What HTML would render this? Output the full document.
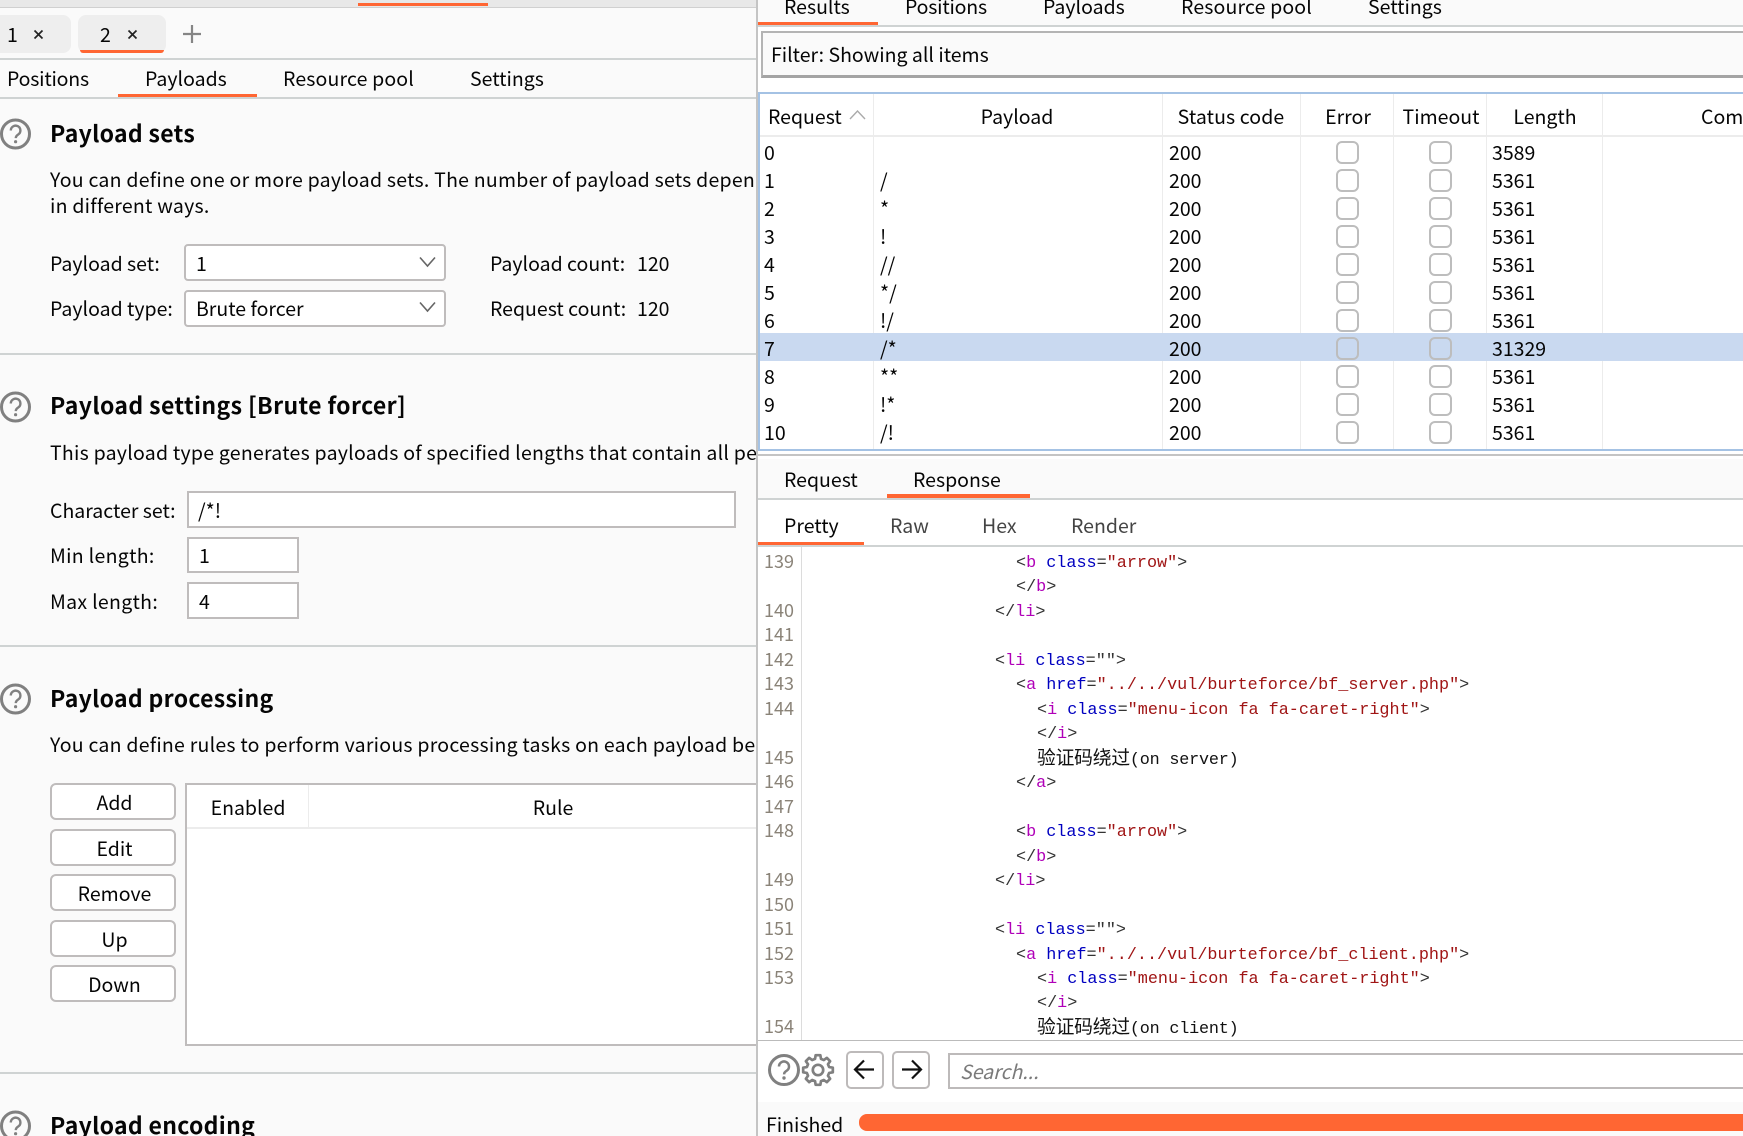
<!DOCTYPE html>
<html><head><meta charset="utf-8"><style>
html,body{margin:0;padding:0;width:1743px;height:1136px;overflow:hidden;background:#fff}
body{position:relative;font-family:"Noto Sans CJK SC","Liberation Sans",sans-serif;font-size:19.5px;color:#050505}
div,span.t,svg{box-sizing:border-box}
.a{position:absolute}
.t{position:absolute;white-space:nowrap;line-height:30px;height:30px}
.c{transform:translateX(-50%)}
.h{font-weight:700;font-size:23px;letter-spacing:.3px}
.p{letter-spacing:.24px}
.or{position:absolute;background:#ff6633}
.ln{position:absolute;background:#cfd3d3}
.in{position:absolute;background:#fff;border:2px solid #bfbcbc}
.sel{border-radius:4px}
.btn{position:absolute;left:50px;width:126px;height:37px;background:#fff;border:2px solid #bfbcbc;border-radius:6px;text-align:center;line-height:34px;padding-left:3px}
.sep{position:absolute;width:1px;background:#ececec}
.cb{position:absolute;width:23px;height:23px;border:2px solid #bdbdbd;border-radius:6px;background:#fff}
.code{position:absolute;white-space:pre;font-family:"Liberation Mono","Noto Sans CJK SC",monospace;font-size:16.8px;line-height:24px;height:24px;color:#333}
.code b,.code i{font-weight:400;font-style:normal}
.m{color:#b000b8}.u{color:#0000c0}.r{color:#a01515}
.zh{font-family:"Noto Sans CJK SC",sans-serif;font-size:18.8px;color:#111}
.k{color:#111;letter-spacing:-.2px}
.n{position:absolute;left:764px;font-size:18px;line-height:24px;color:#8a8378;white-space:nowrap}
</style></head><body>

<!-- LEFT PANEL -->
<div class="a" id="left" style="left:0;top:0;width:757px;height:1136px;background:#fafafa;overflow:hidden">
<div class="a" style="left:0;top:0;width:757px;height:7px;background:#e8e8e8"></div>
<div class="ln" style="left:0;top:7px;width:757px;height:1px;background:#d0d0d0"></div>
<div class="or" style="left:358px;top:3px;width:130px;height:3px"></div>

<div class="a" style="left:-10px;top:15px;width:81px;height:38px;background:#eee;border-radius:8px"></div>
<div class="a" style="left:78px;top:15px;width:88px;height:38px;background:#eee;border-radius:8px"></div>
<div class="or" style="left:80px;top:50px;width:84px;height:3px;border-radius:0 0 3px 3px"></div>
<span class="t" style="left:7px;top:19px">1</span>
<svg class="a" style="left:33px;top:29px" width="11" height="11"><path d="M1.5 1.5L9.5 9.5M9.5 1.5L1.5 9.5" stroke="#222" stroke-width="1.7" fill="none"/></svg>
<span class="t" style="left:100px;top:19px">2</span>
<svg class="a" style="left:127px;top:29px" width="11" height="11"><path d="M1.5 1.5L9.5 9.5M9.5 1.5L1.5 9.5" stroke="#222" stroke-width="1.7" fill="none"/></svg>
<svg class="a" style="left:182px;top:24px" width="20" height="20"><path d="M10 1V19M1 10H19" stroke="#858585" stroke-width="2.2" fill="none"/></svg>
<div class="ln" style="left:0;top:58px;width:757px;height:2px"></div>

<span class="t" style="left:7px;top:63px;letter-spacing:-.2px">Positions</span>
<span class="t" style="left:145px;top:63px">Payloads</span>
<span class="t" style="left:283px;top:63px;letter-spacing:.15px">Resource pool</span>
<span class="t" style="left:470px;top:63px">Settings</span>
<div class="or" style="left:118px;top:94px;width:139px;height:3px"></div>
<div class="ln" style="left:0;top:97px;width:757px;height:2px"></div>

<!-- Payload sets -->
<svg class="a" style="left:0;top:118px" width="32" height="32"><circle cx="15.5" cy="16" r="14" fill="none" stroke="#808080" stroke-width="3"/><path d="M10.8 12.5a4.8 4.8 0 1 1 7.4 4c-1.6 1-2.4 1.8-2.4 3.6" fill="none" stroke="#808080" stroke-width="2.4"/><circle cx="15.6" cy="23.7" r="1.6" fill="#808080"/></svg>
<span class="t h" style="left:50px;top:117px">Payload sets</span>
<span class="t p" style="left:50px;top:164px">You can define one or more payload sets. The number of payload sets depends on the attack type defined in the Positions tab.</span>
<span class="t p" style="left:50px;top:190px">in different ways.</span>

<span class="t" style="left:50px;top:248px">Payload set:</span>
<div class="in sel" style="left:184px;top:244px;width:262px;height:37px"></div>
<span class="t" style="left:196px;top:248px">1</span>
<svg class="a" style="left:419px;top:256px" width="17" height="12"><path d="M1 1.5L8.5 10L16 1.5" fill="none" stroke="#666" stroke-width="1.6"/></svg>
<span class="t" style="left:490px;top:248px">Payload count:</span><span class="t" style="left:637px;top:248px">120</span>

<span class="t" style="left:50px;top:293px">Payload type:</span>
<div class="in sel" style="left:184px;top:290px;width:262px;height:37px"></div>
<span class="t" style="left:196px;top:293px">Brute forcer</span>
<svg class="a" style="left:419px;top:301px" width="17" height="12"><path d="M1 1.5L8.5 10L16 1.5" fill="none" stroke="#666" stroke-width="1.6"/></svg>
<span class="t" style="left:490px;top:293px">Request count:</span><span class="t" style="left:637px;top:293px">120</span>
<div class="ln" style="left:0;top:353px;width:757px;height:2px"></div>

<!-- Payload settings -->
<svg class="a" style="left:0;top:391px" width="32" height="32"><circle cx="15.5" cy="16" r="14" fill="none" stroke="#808080" stroke-width="3"/><path d="M10.8 12.5a4.8 4.8 0 1 1 7.4 4c-1.6 1-2.4 1.8-2.4 3.6" fill="none" stroke="#808080" stroke-width="2.4"/><circle cx="15.6" cy="23.7" r="1.6" fill="#808080"/></svg>
<span class="t h" style="left:50px;top:389px;letter-spacing:.38px">Payload settings [Brute forcer]</span>
<span class="t p" style="left:50px;top:437px">This payload type generates payloads of specified lengths that contain all permutations of a specified character set.</span>

<span class="t" style="left:50px;top:495px">Character set:</span>
<div class="in" style="left:187px;top:491px;width:549px;height:37px"></div>
<span class="t" style="left:198px;top:495px">/*!</span>
<span class="t" style="left:50px;top:540px;letter-spacing:.3px">Min length:</span>
<div class="in" style="left:187px;top:537px;width:112px;height:36px"></div>
<span class="t" style="left:199px;top:540px">1</span>
<span class="t" style="left:50px;top:586px;letter-spacing:.3px">Max length:</span>
<div class="in" style="left:187px;top:582px;width:112px;height:37px"></div>
<span class="t" style="left:199px;top:586px">4</span>
<div class="ln" style="left:0;top:645px;width:757px;height:2px"></div>

<!-- Payload processing -->
<svg class="a" style="left:0;top:683px" width="32" height="32"><circle cx="15.5" cy="16" r="14" fill="none" stroke="#808080" stroke-width="3"/><path d="M10.8 12.5a4.8 4.8 0 1 1 7.4 4c-1.6 1-2.4 1.8-2.4 3.6" fill="none" stroke="#808080" stroke-width="2.4"/><circle cx="15.6" cy="23.7" r="1.6" fill="#808080"/></svg>
<span class="t h" style="left:50px;top:682px">Payload processing</span>
<span class="t p" style="left:50px;top:729px">You can define rules to perform various processing tasks on each payload before it is used.</span>

<div class="btn" style="top:783px">Add</div>
<div class="btn" style="top:829px">Edit</div>
<div class="btn" style="top:874px">Remove</div>
<div class="btn" style="top:920px">Up</div>
<div class="btn" style="top:965px">Down</div>

<div class="in" style="left:185px;top:783px;width:600px;height:263px"></div>
<div class="a" style="left:187px;top:827px;width:570px;height:2px;background:#ececec"></div>
<div class="sep" style="left:308px;top:785px;height:43px"></div>
<span class="t c" style="left:248px;top:792px">Enabled</span>
<span class="t c" style="left:553px;top:792px">Rule</span>
<div class="ln" style="left:0;top:1072px;width:757px;height:2px"></div>

<!-- Payload encoding -->
<svg class="a" style="left:0;top:1110px" width="32" height="32"><circle cx="15.5" cy="16" r="14" fill="none" stroke="#808080" stroke-width="3"/><path d="M10.8 12.5a4.8 4.8 0 1 1 7.4 4c-1.6 1-2.4 1.8-2.4 3.6" fill="none" stroke="#808080" stroke-width="2.4"/><circle cx="15.6" cy="23.7" r="1.6" fill="#808080"/></svg>
<span class="t h" style="left:50px;top:1109px">Payload encoding</span>
</div>

<!-- RIGHT PANEL -->
<div class="a" style="left:756px;top:0;width:2px;height:1136px;background:#c4c4c4"></div>
<div class="a" style="left:758px;top:0;width:985px;height:1136px;background:#fff"></div>

<div class="a" style="left:758px;top:0;width:985px;height:26px;background:#fafafa"></div>
<span class="t" style="left:784px;top:-9px">Results</span>
<span class="t" style="left:905px;top:-9px;letter-spacing:-.2px">Positions</span>
<span class="t" style="left:1043px;top:-9px">Payloads</span>
<span class="t" style="left:1181px;top:-9px;letter-spacing:.15px">Resource pool</span>
<span class="t" style="left:1368px;top:-9px">Settings</span>
<div class="or" style="left:758px;top:22px;width:120px;height:3px"></div>
<div class="ln" style="left:758px;top:25px;width:985px;height:2px"></div>

<div class="a" style="left:761px;top:31px;width:990px;height:47px;background:#fafafa;border:2px solid #b4b4b4;border-bottom:3px solid #a4a4a4"></div>
<span class="t" style="left:771px;top:39px">Filter: Showing all items</span>

<!-- table -->
<div class="a" style="left:758px;top:92px;width:985px;height:2px;background:#a4c2e4"></div>
<div class="a" style="left:758px;top:92px;width:2px;height:358px;background:#a4c2e4"></div>
<div class="a" style="left:758px;top:449px;width:985px;height:2px;background:#a4c2e4"></div>
<div class="a" style="left:760px;top:135px;width:983px;height:2px;background:#ececec"></div>
<div class="sep" style="left:873px;top:94px;height:355px"></div>
<div class="sep" style="left:1162px;top:94px;height:355px"></div>
<div class="sep" style="left:1300px;top:94px;height:355px"></div>
<div class="sep" style="left:1393px;top:94px;height:355px"></div>
<div class="sep" style="left:1486px;top:94px;height:355px"></div>
<div class="sep" style="left:1602px;top:94px;height:355px"></div>
<div class="a" style="left:760px;top:333px;width:983px;height:28px;background:#c9d9f0"></div>
<span class="t" style="left:768px;top:101px">Request</span>
<svg class="a" style="left:849px;top:109px" width="17" height="11"><path d="M1 10L8.5 2L16 10" fill="none" stroke="#aaa" stroke-width="1.4"/></svg>
<span class="t c" style="left:1017px;top:101px">Payload</span>
<span class="t c" style="left:1231px;top:101px;letter-spacing:.1px">Status code</span>
<span class="t c" style="left:1348px;top:101px">Error</span>
<span class="t c" style="left:1441px;top:101px">Timeout</span>
<span class="t c" style="left:1545px;top:101px">Length</span>
<span class="t" style="left:1701px;top:101px">Comment</span>

<span class="t" style="left:764px;top:137px">0</span><span class="t" style="left:1169px;top:137px">200</span><span class="t" style="left:1492px;top:137px">3589</span>
<span class="t" style="left:764px;top:165px">1</span><span class="t" style="left:880px;top:165px">/</span><span class="t" style="left:1169px;top:165px">200</span><span class="t" style="left:1492px;top:165px">5361</span>
<span class="t" style="left:764px;top:193px">2</span><span class="t" style="left:880px;top:193px">*</span><span class="t" style="left:1169px;top:193px">200</span><span class="t" style="left:1492px;top:193px">5361</span>
<span class="t" style="left:764px;top:221px">3</span><span class="t" style="left:880px;top:221px">!</span><span class="t" style="left:1169px;top:221px">200</span><span class="t" style="left:1492px;top:221px">5361</span>
<span class="t" style="left:764px;top:249px">4</span><span class="t" style="left:880px;top:249px">//</span><span class="t" style="left:1169px;top:249px">200</span><span class="t" style="left:1492px;top:249px">5361</span>
<span class="t" style="left:764px;top:277px">5</span><span class="t" style="left:880px;top:277px">*/</span><span class="t" style="left:1169px;top:277px">200</span><span class="t" style="left:1492px;top:277px">5361</span>
<span class="t" style="left:764px;top:305px">6</span><span class="t" style="left:880px;top:305px">!/</span><span class="t" style="left:1169px;top:305px">200</span><span class="t" style="left:1492px;top:305px">5361</span>
<span class="t" style="left:764px;top:333px">7</span><span class="t" style="left:880px;top:333px">/*</span><span class="t" style="left:1169px;top:333px">200</span><span class="t" style="left:1492px;top:333px">31329</span>
<span class="t" style="left:764px;top:361px">8</span><span class="t" style="left:880px;top:361px">**</span><span class="t" style="left:1169px;top:361px">200</span><span class="t" style="left:1492px;top:361px">5361</span>
<span class="t" style="left:764px;top:389px">9</span><span class="t" style="left:880px;top:389px">!*</span><span class="t" style="left:1169px;top:389px">200</span><span class="t" style="left:1492px;top:389px">5361</span>
<span class="t" style="left:764px;top:417px">10</span><span class="t" style="left:880px;top:417px">/!</span><span class="t" style="left:1169px;top:417px">200</span><span class="t" style="left:1492px;top:417px">5361</span>

<div class="cb" style="left:1336px;top:141px"></div><div class="cb" style="left:1429px;top:141px"></div>
<div class="cb" style="left:1336px;top:169px"></div><div class="cb" style="left:1429px;top:169px"></div>
<div class="cb" style="left:1336px;top:197px"></div><div class="cb" style="left:1429px;top:197px"></div>
<div class="cb" style="left:1336px;top:225px"></div><div class="cb" style="left:1429px;top:225px"></div>
<div class="cb" style="left:1336px;top:253px"></div><div class="cb" style="left:1429px;top:253px"></div>
<div class="cb" style="left:1336px;top:281px"></div><div class="cb" style="left:1429px;top:281px"></div>
<div class="cb" style="left:1336px;top:309px"></div><div class="cb" style="left:1429px;top:309px"></div>
<div class="cb" style="left:1336px;top:337px;background:#c9d9f0"></div><div class="cb" style="left:1429px;top:337px;background:#c9d9f0"></div>
<div class="cb" style="left:1336px;top:365px"></div><div class="cb" style="left:1429px;top:365px"></div>
<div class="cb" style="left:1336px;top:393px"></div><div class="cb" style="left:1429px;top:393px"></div>
<div class="cb" style="left:1336px;top:421px"></div><div class="cb" style="left:1429px;top:421px"></div>

<div class="a" style="left:758px;top:454px;width:985px;height:2px;background:#c4c4c4"></div>
<div class="a" style="left:758px;top:459px;width:985px;height:39px;background:#fafafa"></div>
<span class="t" style="left:784px;top:464px">Request</span>
<span class="t" style="left:913px;top:464px">Response</span>
<div class="or" style="left:887px;top:494px;width:143px;height:4px"></div>
<div class="ln" style="left:758px;top:498px;width:985px;height:2px"></div>

<span class="t" style="left:784px;top:510px">Pretty</span>
<span class="t" style="left:890px;top:510px;color:#444">Raw</span>
<span class="t" style="left:982px;top:510px;color:#444">Hex</span>
<span class="t" style="left:1071px;top:510px;color:#444">Render</span>
<div class="or" style="left:758px;top:542px;width:106px;height:3px"></div>
<div class="ln" style="left:758px;top:545px;width:985px;height:2px"></div>
<div class="a" style="left:801px;top:547px;width:1px;height:493px;background:#dcdcdc"></div>

<div class="n" style="top:549px">139</div>
<div class="n" style="top:598px">140</div>
<div class="n" style="top:622px">141</div>
<div class="n" style="top:647px">142</div>
<div class="n" style="top:671px">143</div>
<div class="n" style="top:696px">144</div>
<div class="n" style="top:745px">145</div>
<div class="n" style="top:769px">146</div>
<div class="n" style="top:794px">147</div>
<div class="n" style="top:818px">148</div>
<div class="n" style="top:867px">149</div>
<div class="n" style="top:892px">150</div>
<div class="n" style="top:916px">151</div>
<div class="n" style="top:941px">152</div>
<div class="n" style="top:965px">153</div>
<div class="n" style="top:1014px">154</div>

<div class="code" style="left:1016px;top:552px">&lt;<b class="m">b</b> <b class="u">class</b>=<b class="r">"arrow"</b>&gt;</div>
<div class="code" style="left:1016px;top:576px">&lt;/<b class="m">b</b>&gt;</div>
<div class="code" style="left:995px;top:601px">&lt;/<b class="m">li</b>&gt;</div>
<div class="code" style="left:995px;top:650px">&lt;<b class="m">li</b> <b class="u">class</b>=""&gt;</div>
<div class="code" style="left:1016px;top:674px">&lt;<b class="m">a</b> <b class="u">href</b>=<b class="r">"../../vul/burteforce/bf_server.php"</b>&gt;</div>
<div class="code" style="left:1037px;top:699px">&lt;<b class="m">i</b> <b class="u">class</b>=<b class="r">"menu-icon fa fa-caret-right"</b>&gt;</div>
<div class="code" style="left:1037px;top:723px">&lt;/<b class="m">i</b>&gt;</div>
<div class="code k" style="left:1037px;top:745px"><span class="zh">验证码绕过</span>(on server)</div>
<div class="code" style="left:1016px;top:772px">&lt;/<b class="m">a</b>&gt;</div>
<div class="code" style="left:1016px;top:821px">&lt;<b class="m">b</b> <b class="u">class</b>=<b class="r">"arrow"</b>&gt;</div>
<div class="code" style="left:1016px;top:846px">&lt;/<b class="m">b</b>&gt;</div>
<div class="code" style="left:995px;top:870px">&lt;/<b class="m">li</b>&gt;</div>
<div class="code" style="left:995px;top:919px">&lt;<b class="m">li</b> <b class="u">class</b>=""&gt;</div>
<div class="code" style="left:1016px;top:944px">&lt;<b class="m">a</b> <b class="u">href</b>=<b class="r">"../../vul/burteforce/bf_client.php"</b>&gt;</div>
<div class="code" style="left:1037px;top:968px">&lt;<b class="m">i</b> <b class="u">class</b>=<b class="r">"menu-icon fa fa-caret-right"</b>&gt;</div>
<div class="code" style="left:1037px;top:992px">&lt;/<b class="m">i</b>&gt;</div>
<div class="code k" style="left:1037px;top:1014px"><span class="zh">验证码绕过</span>(on client)</div>

<!-- bottom -->
<div class="a" style="left:758px;top:1040px;width:985px;height:62px;background:#fff;border-top:1px solid #bbb"></div>
<svg class="a" style="left:767px;top:1053px" width="34" height="34"><circle cx="17" cy="17" r="14.5" fill="none" stroke="#808080" stroke-width="3"/><path d="M12 13.5a5 5 0 1 1 7.7 4.2c-1.7 1-2.6 1.8-2.6 3.7" fill="none" stroke="#808080" stroke-width="2.5"/><circle cx="17" cy="25" r="1.7" fill="#808080"/></svg>
<svg class="a" style="left:800px;top:1052px" width="36" height="36"><g transform="translate(18 18)" fill="none" stroke="#808080" stroke-width="2.7" stroke-linejoin="round"><path d="M-2.98-11.11L-2.35-14.82L2.35-14.82L2.98-11.11L5.75-9.96L8.82-12.14L12.14-8.82L9.96-5.75L11.11-2.98L14.82-2.35L14.82 2.35L11.11 2.98L9.96 5.75L12.14 8.82L8.82 12.14L5.75 9.96L2.98 11.11L2.35 14.82L-2.35 14.82L-2.98 11.11L-5.75 9.96L-8.82 12.14L-12.14 8.82L-9.96 5.75L-11.11 2.98L-14.82 2.35L-14.82-2.35L-11.11-2.98L-9.96-5.75L-12.14-8.82L-8.82-12.14L-5.75-9.96Z"/><circle r="5.2"/></g></svg>
<div class="a" style="left:846px;top:1051px;width:38px;height:38px;background:#fff;border:2px solid #bdbaba;border-radius:5px"></div>
<svg class="a" style="left:853px;top:1058px" width="23" height="23"><path d="M21 11.5H2M11 2.5L2 11.5L11 20.5" fill="none" stroke="#111" stroke-width="2.2"/></svg>
<div class="a" style="left:892px;top:1051px;width:38px;height:38px;background:#fff;border:2px solid #bdbaba;border-radius:5px"></div>
<svg class="a" style="left:900px;top:1058px" width="23" height="23"><path d="M2 11.5H21M12 2.5L21 11.5L12 20.5" fill="none" stroke="#111" stroke-width="2.2"/></svg>
<div class="a" style="left:948px;top:1053px;width:810px;height:36px;background:#fff;border:2px solid #bdbaba"></div>
<span class="t" style="left:960px;top:1056px;font-style:italic;color:#7a7a7a">Search...</span>

<div class="a" style="left:758px;top:1102px;width:985px;height:34px;background:#fafafa"></div>
<span class="t" style="left:766px;top:1109px">Finished</span>
<div class="or" style="left:859px;top:1114px;width:884px;height:17px;border-radius:8px 0 0 8px"></div>

</body></html>
